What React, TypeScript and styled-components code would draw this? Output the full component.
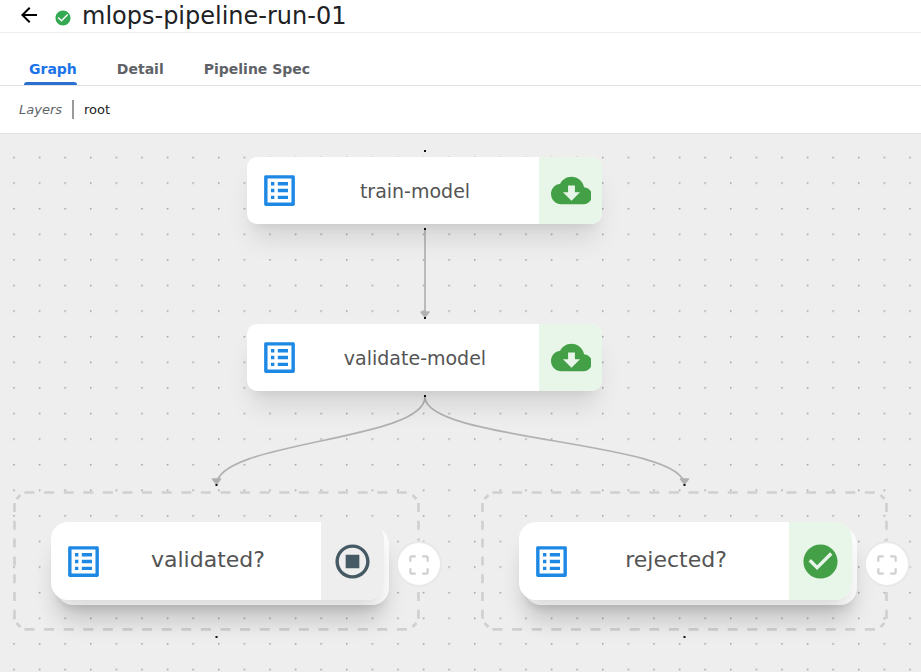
import React from 'react';
import styled, { createGlobalStyle, css } from 'styled-components';

const GlobalStyle = createGlobalStyle`
  *, *::before, *::after { box-sizing: border-box; }
  body {
    margin: 0;
    background: #fff;
    color: #202124;
    font-family: "DejaVu Sans", sans-serif;
  }
  button { font: inherit; border: 0; padding: 0; background: none; cursor: pointer; }
`;

const Page = styled.div`
  min-height: 100vh;
  display: flex;
  flex-direction: column;
`;

const TitleBar = styled.header`
  height: 33px;
  padding-left: 17px;
  display: flex;
  align-items: center;
  border-bottom: 1px solid #eeeeee;
`;

const BackButton = styled.button`
  display: flex;
  margin-right: 13px;
  padding-bottom: 2px;
  color: #000;
`;

const StatusIcon = styled.span`
  display: flex;
  margin-right: 10px;
  padding-top: 3px;
`;

const Title = styled.h1`
  margin: 0;
  font-size: 24px;
  line-height: 32px;
  font-weight: 400;
  white-space: nowrap;
`;

const Tabs = styled.nav`
  height: 53px;
  padding-left: 24px;
  display: flex;
  align-items: flex-end;
  gap: 34px;
  border-bottom: 1px solid #e0e3e3;
`;

const Tab = styled.button<{ $active?: boolean }>`
  height: 32px;
  padding: 0 1px 0 5px;
  color: ${p => (p.$active ? '#1a73e8' : '#5f6368')};
  && {
    font-size: 14px;
    line-height: 32px;
    font-weight: 700;
  }
  ${p =>
    p.$active &&
    css`
      position: relative;
      &::after {
        content: '';
        position: absolute;
        left: 0;
        right: 1px;
        bottom: 0;
        height: 3px;
        border-radius: 3px 3px 0 0;
        background: #2a6fd2;
      }
    `}
`;

const LayerBar = styled.div`
  height: 48px;
  padding-left: 19px;
  display: flex;
  align-items: center;
  border-bottom: 1px solid #e0e0e0;
  font-size: 13px;
`;

const LayerLabel = styled.span`
  padding-right: 10px;
  font-style: italic;
  color: #5f6368;
`;

const LayerLink = styled.button`
  height: 19px;
  padding-left: 10px;
  border-left: 2px solid #9a9a9a;
  color: #202124;
`;

const Canvas = styled.main`
  position: relative;
  flex: 1;
  min-height: 538px;
  overflow: hidden;
  background: #eeeeee;
`;

const Drawing = styled.svg`
  position: absolute;
  inset: 0;
  width: 100%;
  height: 100%;
  overflow: visible;
  pointer-events: none;
`;

const Place = styled.div<{ $x: number; $y: number }>`
  position: absolute;
  left: ${p => p.$x}px;
  top: ${p => p.$y}px;
`;

const nodeBase = css`
  display: flex;
  align-items: stretch;
  overflow: hidden;
  background: #fff;
  color: #545454;
`;

const TaskNode = styled.button`
  && {
    ${nodeBase}
    width: 355px;
    height: 67px;
    border-radius: 10px;
    font-size: 19px;
    box-shadow: 0 20px 26px -5px rgba(0, 0, 0, 0.1), 0 9px 10px -5px rgba(0, 0, 0, 0.05);
  }
`;

const Group = styled.section`
  width: 407px;
  height: 140px;
  padding: 31px 37px;
`;

const Stack = styled.div`
  position: relative;
  width: 333px;
  &::before {
    content: '';
    position: absolute;
    inset: 5px -5px -5px 5px;
    border-radius: 17px;
    background: #fbfbfb;
    box-shadow: 0 20px 26px -5px rgba(0, 0, 0, 0.12), 0 9px 10px -5px rgba(0, 0, 0, 0.08);
  }
`;

const GroupNode = styled.button`
  && {
    ${nodeBase}
    position: relative;
    width: 100%;
    height: 78px;
    border-radius: 17px;
    font-size: 22px;
    box-shadow: 0 20px 26px -5px rgba(0, 0, 0, 0.09), 0 9px 10px -5px rgba(0, 0, 0, 0.05);
  }
`;

const KindIcon = styled.span`
  width: 65px;
  display: flex;
  align-items: center;
  justify-content: center;
`;

const NodeName = styled.span`
  flex: 1;
  align-self: center;
  padding-right: 21px;
  text-align: center;
  white-space: nowrap;
`;

const GroupName = styled(NodeName)`
  padding-bottom: 3px;
`;

const State = styled.span<{ $tone: string }>`
  width: 63px;
  display: flex;
  align-items: center;
  justify-content: center;
  background: ${p => p.$tone};
`;

const CloudClip = styled.span`
  width: 40px;
  display: flex;
  overflow: hidden;
  svg { flex: none; }
`;

const ExpandButton = styled.button`
  && {
    position: absolute;
    left: 382px;
    top: 50px;
    width: 46px;
    height: 46px;
    padding-top: 2px;
    display: flex;
    align-items: center;
    justify-content: center;
    border: 2px solid #e8e8ea;
    border-radius: 50%;
    background: #fff;
  }
`;

const Icon = ({ d, color, size = 41 }: { d: string; color: string; size?: number }) => (
  <svg width={size} height={size} viewBox="0 0 24 24" fill={color} aria-hidden="true">
    <path d={d} />
  </svg>
);

const ARROW = 'M20 11H7.83l5.59-5.59L12 4l-8 8 8 8 1.41-1.41L7.83 13H20v-2z';
const LIST =
  'M19 5v14H5V5h14m1.1-2H3.9c-.5 0-.9.4-.9.9v16.2c0 .4.4.9.9.9h16.2c.4 0 .9-.5.9-.9V3.9c0-.5-.5-.9-.9-.9zM11 7h6v2h-6V7zm0 4h6v2h-6v-2zm0 4h6v2h-6zM7 7h2v2H7zm0 4h2v2H7zm0 4h2v2H7z';
const CLOUD =
  'M19.35 10.04C18.67 6.59 15.64 4 12 4 9.11 4 6.6 5.64 5.35 8.04 2.34 8.36 0 10.91 0 14c0 3.31 2.69 6 6 6h13c2.76 0 5-2.24 5-5 0-2.64-2.05-4.78-4.65-4.96zM17 13l-5 5-5-5h3V9h4v4h3z';
const CHECK =
  'M12 2C6.48 2 2 6.48 2 12s4.48 10 10 10 10-4.48 10-10S17.52 2 12 2zm-2 15l-5-5 1.41-1.41L10 14.17l7.59-7.59L19 8l-9 9z';
const STOP =
  'M12 2C6.48 2 2 6.48 2 12s4.48 10 10 10 10-4.48 10-10S17.52 2 12 2zm0 18c-4.41 0-8-3.59-8-8s3.59-8 8-8 8 3.59 8 8-3.59 8-8 8zm4-4H8V8h8v8z';
const FRAME =
  'M3 5v4h2V5h4V3H5c-1.1 0-2 .9-2 2zm2 10H3v4c0 1.1.9 2 2 2h4v-2H5v-4zm14 4h-4v2h4c1.1 0 2-.9 2-2v-4h-2v4zm0-16h-4v2h4v4h2V5c0-1.1-.9-2-2-2z';

const tasks = [
  { name: 'train-model', x: 247, y: 23 },
  { name: 'validate-model', x: 247, y: 190 },
];

const groups = [
  { name: 'validated?', x: 14, y: 357, icon: STOP, color: '#455a64', tone: '#eeeeee' },
  { name: 'rejected?', x: 482, y: 357, icon: CHECK, color: '#43a047', tone: '#e8f5e9' },
];

const edges = [
  'M425 96V184',
  'M425 263C425 307 216.5 307 216.5 351',
  'M425 263C425 307 684.5 307 684.5 351',
];
const arrows = [[425, 184], [216.5, 351], [684.5, 351]];
const handles = [[425, 17], [425, 95], [425, 184], [425, 262], [216.5, 351], [684.5, 351], [216.5, 503], [684.5, 503]];

const DashedFrame = () => (
  <Drawing viewBox="0 0 407 140" aria-hidden="true">
    <g fill="none" stroke="#d0d0d2" strokeWidth="2.7">
      <path d="M10.5 1.5H393M10.5 138.3H393" strokeDasharray="10 9.6" />
      <path d="M.5 12V128M404.5 12V128" strokeDasharray="9 8.8" />
      <path d="M2.5 8l4-4M402.5 8l-4-4M2.5 132l4 4M402.5 132l-4 4" />
    </g>
  </Drawing>
);

export default function App() {
  return (
    <Page>
      <GlobalStyle />
      <TitleBar>
        <BackButton aria-label="Back">
          <Icon d={ARROW} color="#000" size={24} />
        </BackButton>
        <StatusIcon>
          <Icon d={CHECK} color="#34a853" size={18} />
        </StatusIcon>
        <Title>mlops-pipeline-run-01</Title>
      </TitleBar>
      <Tabs>
        <Tab $active>Graph</Tab>
        <Tab>Detail</Tab>
        <Tab>Pipeline Spec</Tab>
      </Tabs>
      <LayerBar>
        <LayerLabel>Layers</LayerLabel>
        <LayerLink>root</LayerLink>
      </LayerBar>
      <Canvas>
        <Drawing aria-hidden="true">
          <defs>
            <pattern id="dots" x="13.2" y="22.7" width="25.6" height="25.6" patternUnits="userSpaceOnUse">
              <circle cx="0.8" cy="0.8" r="0.8" fill="#8a8a8e" />
            </pattern>
          </defs>
          <rect width="100%" height="100%" fill="url(#dots)" />
          {edges.map(d => (
            <path key={d} d={d} fill="none" stroke="#b1b1b3" strokeWidth="1.7" />
          ))}
          {arrows.map(([x, y]) => (
            <path key={x} d={`M${x - 4} ${y - 6}h8l-4 5z`} fill="#b1b1b3" stroke="#b1b1b3" strokeWidth="1.5" strokeLinejoin="round" />
          ))}
          {handles.map(([x, y]) => (
            <rect key={`${x}-${y}`} x={x - 1} y={y - 1} width="2" height="2" fill="#111" />
          ))}
        </Drawing>
        {tasks.map(t => (
          <Place key={t.name} $x={t.x} $y={t.y}>
            <TaskNode>
              <KindIcon>
                <Icon d={LIST} color="#1e88e5" />
              </KindIcon>
              <NodeName>{t.name}</NodeName>
              <State $tone="#e8f5e9">
                <CloudClip>
                  <Icon d={CLOUD} color="#43a047" />
                </CloudClip>
              </State>
            </TaskNode>
          </Place>
        ))}
        {groups.map(g => (
          <Place key={g.name} $x={g.x} $y={g.y}>
            <Group>
              <DashedFrame />
              <Stack>
                <GroupNode>
                  <KindIcon>
                    <Icon d={LIST} color="#1e88e5" />
                  </KindIcon>
                  <GroupName>{g.name}</GroupName>
                  <State $tone={g.tone}>
                    <Icon d={g.icon} color={g.color} />
                  </State>
                </GroupNode>
              </Stack>
              <ExpandButton aria-label={`Open ${g.name}`}>
                <Icon d={FRAME} color="#cfcfcf" size={26} />
              </ExpandButton>
            </Group>
          </Place>
        ))}
      </Canvas>
    </Page>
  );
}
